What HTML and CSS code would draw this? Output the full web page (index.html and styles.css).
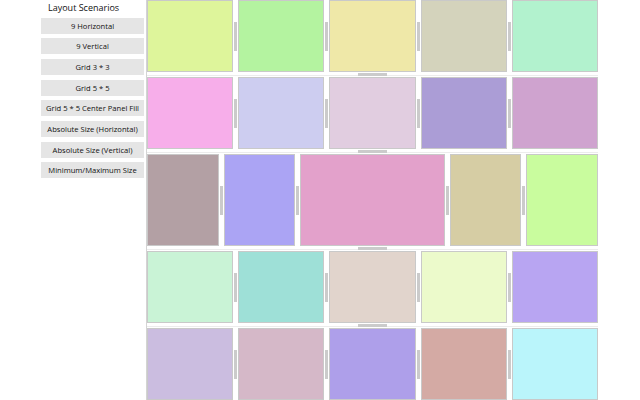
FILE: index.html
```html
<!DOCTYPE html>
<html>
<head>
<meta charset="utf-8">
<link rel="stylesheet" href="styles.css">
</head>
<body>
<div class="app">
  <aside class="sidebar">
    <div class="title">Layout Scenarios</div>
    <button class="btn">9 Horizontal</button>
    <button class="btn">9 Vertical</button>
    <button class="btn">Grid 3 * 3</button>
    <button class="btn">Grid 5 * 5</button>
    <button class="btn">Grid 5 * 5 Center Panel Fill</button>
    <button class="btn">Absolute Size (Horizontal)</button>
    <button class="btn">Absolute Size (Vertical)</button>
    <button class="btn">Minimum/Maximum Size</button>
  </aside>
  <main class="panels">
    <div class="row">
      <div class="panel c11"></div><div class="vsplit"></div>
      <div class="panel c12"></div><div class="vsplit"></div>
      <div class="panel c13"></div><div class="vsplit"></div>
      <div class="panel c14"></div><div class="vsplit"></div>
      <div class="panel c15"></div>
    </div>
    <div class="hsplit"></div>
    <div class="row">
      <div class="panel c21"></div><div class="vsplit"></div>
      <div class="panel c22"></div><div class="vsplit"></div>
      <div class="panel c23"></div><div class="vsplit"></div>
      <div class="panel c24"></div><div class="vsplit"></div>
      <div class="panel c25"></div>
    </div>
    <div class="hsplit"></div>
    <div class="row row-tall">
      <div class="panel c31"></div><div class="vsplit"></div>
      <div class="panel c32"></div><div class="vsplit"></div>
      <div class="panel panel-wide c33"></div><div class="vsplit"></div>
      <div class="panel c34"></div><div class="vsplit"></div>
      <div class="panel c35"></div>
    </div>
    <div class="hsplit"></div>
    <div class="row">
      <div class="panel c41"></div><div class="vsplit"></div>
      <div class="panel c42"></div><div class="vsplit"></div>
      <div class="panel c43"></div><div class="vsplit"></div>
      <div class="panel c44"></div><div class="vsplit"></div>
      <div class="panel c45"></div>
    </div>
    <div class="hsplit"></div>
    <div class="row">
      <div class="panel c51"></div><div class="vsplit"></div>
      <div class="panel c52"></div><div class="vsplit"></div>
      <div class="panel c53"></div><div class="vsplit"></div>
      <div class="panel c54"></div><div class="vsplit"></div>
      <div class="panel c55"></div>
    </div>
  </main>
</div>
</body>
</html>
```

FILE: styles.css
```css
html, body {
  margin: 0;
  padding: 0;
  background: #ffffff;
  height: 400px;
  overflow: hidden;
}

.app {
  width: 557px;
  height: 400px;
  margin: 0 0 0 41px;
  display: flex;
}

.sidebar {
  width: 105px;
  flex: 0 0 105px;
  display: flex;
  flex-direction: column;
  align-items: flex-start;
}

.title {
  font-family: "Open Sans", "Noto Sans", sans-serif;
  font-size: 9px;
  color: #111111;
  height: 17.7px;
  line-height: 15px;
  padding-left: 7px;
}

.btn {
  display: block;
  width: 103px;
  height: 16px;
  margin: 0 0 4.66px 0;
  padding: 0;
  border: none;
  background: #e5e5e5;
  color: #111111;
  font-family: "Open Sans", "Noto Sans", sans-serif;
  font-size: 7.6px;
  line-height: 16px;
  text-align: center;
  white-space: nowrap;
}

.panels {
  width: 451px;
  flex: 0 0 451px;
  height: 400px;
  border-left: 1px solid #d4d4d4;
  display: flex;
  flex-direction: column;
}

.row {
  height: 72px;
  flex: 0 0 72px;
  display: flex;
}

.row-tall {
  height: 92px;
  flex: 0 0 92px;
}

.panel {
  flex: 1 1 0;
  border: 1px solid #c9c9c9;
  box-sizing: border-box;
}

.panel-wide {
  flex: 2.04 1 0;
}

.vsplit {
  flex: 0 0 5px;
  display: flex;
  align-items: center;
  justify-content: center;
}

.vsplit::before {
  content: "";
  width: 3px;
  height: 29px;
  background: #cbcbcb;
}

.hsplit {
  flex: 0 0 5px;
  height: 5px;
  display: flex;
  align-items: center;
  justify-content: center;
  background: linear-gradient(#ffffff 0, #ffffff 3px, #ececec 3px, #ececec 4px, #ffffff 4px);
}

.hsplit::before {
  content: "";
  width: 29px;
  height: 3px;
  background: #cbcbcb;
}

.c11 { background: #def59b; }
.c12 { background: #b4f3a0; }
.c13 { background: #efe8a8; }
.c14 { background: #d4d3bc; }
.c15 { background: #b2f2ce; }

.c21 { background: #f7aeea; }
.c22 { background: #cdcdf0; }
.c23 { background: #e1cde0; }
.c24 { background: #ab9dd6; }
.c25 { background: #cfa3cf; }

.c31 { background: #b3a0a4; }
.c32 { background: #aba4f4; }
.c33 { background: #e3a1cb; }
.c34 { background: #d6cda4; }
.c35 { background: #c9fc9e; }

.c41 { background: #c9f3d6; }
.c42 { background: #9ee0d7; }
.c43 { background: #e1d4cc; }
.c44 { background: #ecfacb; }
.c45 { background: #b8a5f2; }

.c51 { background: #cbbde0; }
.c52 { background: #d5b8c8; }
.c53 { background: #ae9fea; }
.c54 { background: #d4aaa4; }
.c55 { background: #baf5fb; }
```
